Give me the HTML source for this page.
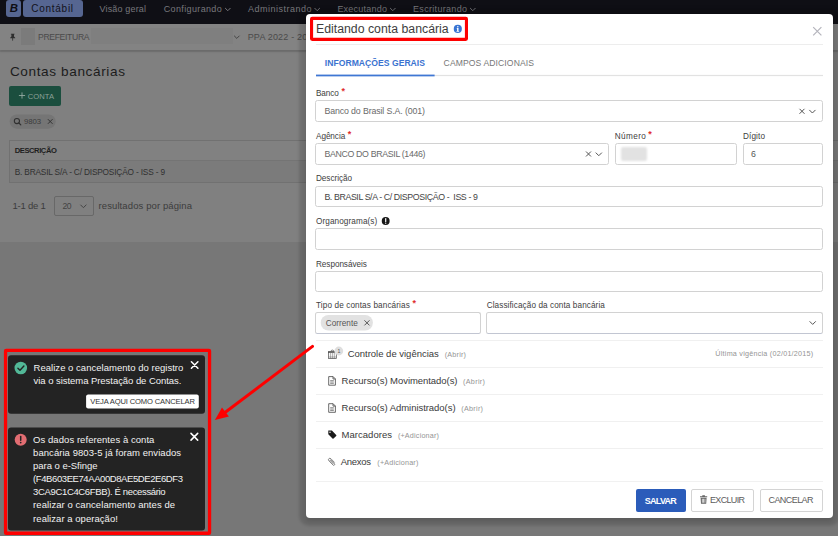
<!DOCTYPE html>
<html lang="pt-BR"><head><meta charset="utf-8"><title>Editando conta bancária</title>
<style>
html,body{margin:0;padding:0}
body{width:838px;height:536px;position:relative;overflow:hidden;background:#777777;font-family:"Liberation Sans",sans-serif}
.a{position:absolute;box-sizing:border-box}
.t{position:absolute;white-space:nowrap;line-height:1}
svg.l{position:absolute;left:0;top:0;width:838px;height:536px;overflow:visible}
.inp{position:absolute;box-sizing:border-box;border:1px solid #d2d2d2;border-radius:2.5px;background:#fff}
.sep{position:absolute;left:316px;width:507px;height:1px;background:#f0f0f0}
</style></head><body>
<!-- page layer -->
<div class="a" style="left:0;top:52px;width:838px;height:189.6px;background:#808080"></div>
<div class="a" style="left:0;top:23px;width:838px;height:27.4px;background:#838383;box-shadow:0 1.5px 2px rgba(0,0,0,.1)"></div>
<div class="a" style="left:0;top:0;width:838px;height:23.7px;background:#0f0f15"></div>
<div class="a" style="left:5.9px;top:-0.3px;width:15.4px;height:16.9px;background:#566691;border-radius:3px"></div>
<div class="a" style="left:22.5px;top:-0.3px;width:60.3px;height:17.2px;background:#566691;border-radius:3px"></div>
<div class="a" style="left:21px;top:28px;width:13.5px;height:17px;background:#7b7b7b"></div>
<div class="a" style="left:91px;top:27.6px;width:142px;height:16.2px;background:#7f7f7f"></div>
<div class="a" style="left:9.2px;top:86px;width:51.8px;height:20.2px;background:#1b4e3e;border-radius:2px"></div>
<div class="a" style="left:9.2px;top:140.3px;width:840px;height:43px;border:1px solid #717171;background:#7b7b7b"></div>
<div class="a" style="left:10.2px;top:141.3px;width:840px;height:20px;background:#818181;border-bottom:1px solid #747474"></div>
<div class="a" style="left:53.5px;top:196px;width:40px;height:20px;border:1px solid #686868;border-radius:2px;background:#808080"></div>
<svg class="l" viewBox="0 0 838 536" fill="none">
 <g stroke="#77777c" stroke-width="1" stroke-linecap="round" stroke-linejoin="round">
  <path d="M225.4 8.3l2.4 2.4 2.4-2.4"/><path d="M314.8 8.3l2.4 2.4 2.4-2.4"/><path d="M390.4 8.3l2.4 2.4 2.4-2.4"/><path d="M470.4 8.3l2.4 2.4 2.4-2.4"/>
 </g>
 <path d="M234.4 36l2.4 2.4 2.4-2.4" stroke="#444" stroke-width="1" stroke-linecap="round" stroke-linejoin="round"/>
 <path d="M80.7 205l2.7 2.7 2.7-2.7" stroke="#444" stroke-width="1" stroke-linecap="round" stroke-linejoin="round"/>
 <rect x="9.6" y="114.5" width="46.1" height="14.2" rx="7.1" fill="#757575"/>
 <!-- pin -->
 <path d="M10.9 33.8h3.6v.7h-.5v1.9l1.2 1.3v.6h-2.1v2l-.4.6-.4-.6v-2h-2.1v-.6l1.2-1.3v-1.9h-.5z" fill="#2e2e2e"/>
 <!-- plus -->
 <path d="M22 92.4v6.2M18.9 95.5h6.2" stroke="#93a8a0" stroke-width="0.9"/>
 <!-- search -->
 <circle cx="16.9" cy="121" r="2.6" stroke="#303030" stroke-width="1.05"/><path d="M18.9 123l1.9 1.9" stroke="#303030" stroke-width="1.2" stroke-linecap="round"/>
 <path d="M47.9 119.2l4.6 4.6M52.5 119.2l-4.6 4.6" stroke="#333" stroke-width="1"/>
</svg>
<span class="t" style="left:9.80px;top:3px;font-size:11.4px;color:#0e0e14;font-weight:700;font-style:italic;">B</span>
<span class="t" style="left:31.30px;top:4px;font-size:10.0px;color:#12121a;letter-spacing:0.728px;">Contábil</span>
<span class="t" style="left:99.50px;top:5px;font-size:9.0px;color:#77777c;letter-spacing:0.163px;">Visão geral</span>
<span class="t" style="left:163.75px;top:5px;font-size:9.0px;color:#77777c;letter-spacing:0.359px;">Configurando</span>
<span class="t" style="left:248.00px;top:5px;font-size:9.0px;color:#77777c;letter-spacing:0.497px;">Administrando</span>
<span class="t" style="left:337.40px;top:5px;font-size:9.0px;color:#77777c;letter-spacing:0.228px;">Executando</span>
<span class="t" style="left:413.00px;top:5px;font-size:9.0px;color:#77777c;letter-spacing:0.315px;">Escriturando</span>
<span class="t" style="left:38.00px;top:33px;font-size:8.6px;color:#4a4a4a;letter-spacing:-0.326px;">PREFEITURA</span>
<span class="t" style="left:247.70px;top:33px;font-size:9.0px;color:#4a4a4a;letter-spacing:0.179px;">PPA 2022 - 2025</span>
<span class="t" style="left:9.90px;top:65px;font-size:13.6px;color:#1c1c1c;letter-spacing:0.620px;">Contas bancárias</span>
<span class="t" style="left:27.70px;top:93px;font-size:7.6px;color:#8ba198;letter-spacing:0.071px;">CONTA</span>
<span class="t" style="left:23.90px;top:118px;font-size:7.8px;color:#3c3c3c;letter-spacing:-0.086px;">9803</span>
<span class="t" style="left:14.70px;top:147px;font-size:7.6px;color:#1e1e1e;font-weight:700;letter-spacing:-0.422px;">DESCRIÇÃO</span>
<span class="t" style="left:14.70px;top:168px;font-size:8.3px;color:#303030;letter-spacing:-0.174px;">B. BRASIL S/A - C/ DISPOSIÇÃO - ISS - 9</span>
<span class="t" style="left:12.40px;top:201px;font-size:9.5px;color:#3c3c3c;letter-spacing:-0.211px;">1-1 de 1</span>
<span class="t" style="left:62.60px;top:202px;font-size:8.6px;color:#444;letter-spacing:-0.563px;">20</span>
<span class="t" style="left:98.50px;top:201px;font-size:9.5px;color:#3c3c3c;letter-spacing:0.106px;">resultados por página</span>

<!-- modal -->
<div class="a" style="left:306px;top:14px;width:527px;height:503.5px;background:#fff;border-radius:4px;box-shadow:0 1px 3px 6.5px rgba(0,0,0,.13),0 3px 4px rgba(0,0,0,.12)"></div>
<div class="sep" style="top:43.6px;background:#ededed"></div>
<div class="inp" style="left:315.3px;top:100px;width:507.3px;height:22.4px"></div>
<div class="inp" style="left:315.3px;top:143.4px;width:294px;height:21.2px"></div>
<div class="inp" style="left:614.8px;top:143.4px;width:122.5px;height:21.2px"></div>
<div class="a" style="left:620.5px;top:147px;width:26.2px;height:14px;background:#e2e2e2;border-radius:2px;filter:blur(.8px)"></div>
<div class="inp" style="left:743px;top:143.4px;width:79.6px;height:21.2px"></div>
<div class="inp" style="left:315.3px;top:185.6px;width:507.3px;height:21.6px"></div>
<div class="inp" style="left:315.3px;top:228.4px;width:507.3px;height:21.6px"></div>
<div class="inp" style="left:315.3px;top:271.1px;width:507.3px;height:20.6px"></div>
<div class="inp" style="left:315.3px;top:311.7px;width:165.5px;height:22px;border-bottom-color:#c2c6d2"></div>
<div class="inp" style="left:486.3px;top:311.6px;width:336.3px;height:22px;border-bottom-color:#c2c6d2"></div>
<div class="sep" style="top:340.3px"></div>
<div class="sep" style="top:367px"></div>
<div class="sep" style="top:394px"></div>
<div class="sep" style="top:421px"></div>
<div class="sep" style="top:448.2px"></div>
<div class="sep" style="top:481px;background:#f1f1f1"></div>
<div class="a" style="left:636.25px;top:488.75px;width:49.75px;height:22.8px;background:#2b5cba;border-radius:2px"></div>
<div class="a" style="left:691.25px;top:488.75px;width:62.25px;height:22.8px;border:1px solid #d4d4d4;border-radius:2px;background:#fff"></div>
<div class="a" style="left:760px;top:488.75px;width:62.5px;height:22.8px;border:1px solid #d4d4d4;border-radius:2px;background:#fff"></div>

<!-- toasts -->

<svg class="l" viewBox="0 0 838 536" fill="none">
 <rect x="8" y="355.3" width="197" height="58.4" rx="3" fill="#232323"/>
 <rect x="8" y="427.4" width="197" height="103.2" rx="3" fill="#232323"/>
 <rect x="86.1" y="394.4" width="112.7" height="14.1" rx="2" fill="#fff"/>
 <rect x="5.55" y="350.45" width="204" height="182.8" rx=".6" stroke="#fe0000" stroke-width="3.3"/>
 <rect x="311.55" y="18.4" width="154.9" height="20.95" rx=".6" stroke="#fe0000" stroke-width="3.1"/>
 <rect x="316" y="74.9" width="507" height="1.2" fill="#e2e2e2"/><rect x="316" y="74.6" width="118.6" height="1.75" fill="#3f77d4"/>
 <rect x="320.7" y="315" width="52.2" height="15.4" rx="7.7" fill="#e2e2e2"/>
 <!-- info icon -->
 <circle cx="457.8" cy="28.9" r="4.05" fill="#3874d3"/><circle cx="457.8" cy="26.8" r=".75" fill="#fff"/><path d="M456.9 28.1h1.6v2.9h.6v.7h-2.6v-.7h.6v-2.2h-.5z" fill="#fff"/>
 <!-- close -->
 <path d="M813.2 27.1l8.2 8.2M821.4 27.1l-8.2 8.2" stroke="#b4b4bc" stroke-width="1.2"/>
 <!-- select icons -->
 <g stroke="#555" stroke-width="1" stroke-linecap="round" stroke-linejoin="round">
  <path d="M799.8 109.1l4.4 4.4M804.2 109.1l-4.4 4.4"/><path d="M809.6 110.2l2.8 2.8 2.8-2.8"/>
  <path d="M586.3 151.8l4.4 4.4M590.7 151.8l-4.4 4.4"/><path d="M596 152.9l2.8 2.8 2.8-2.8"/>
  <path d="M809.9 321.6l2.8 2.8 2.8-2.8"/>
  <path d="M364.7 320.6l4.5 4.5M369.2 320.6l-4.5 4.5"/>
 </g>
 <!-- asterisks -->
 <g fill="#e02d2d" font-family="Liberation Sans, sans-serif" font-size="9" font-weight="700">
  <text x="341.6" y="94.3">*</text><text x="347.7" y="137.1">*</text><text x="648.2" y="137.1">*</text><text x="412.6" y="306.4">*</text>
 </g>
 <!-- organograma ! -->
 <circle cx="385.7" cy="221" r="3.95" fill="#181818"/><path d="M385.7 218.5v3" stroke="#fff" stroke-width="1.2" stroke-linecap="round"/><circle cx="385.7" cy="223.2" r=".65" fill="#fff"/>
 <!-- calendar -->
 <g stroke="#4a4a4a" fill="none"><rect x="328.4" y="351.8" width="7.9" height="6.8" stroke-width=".7"/><path d="M328 352.1h8.7" stroke-width="1.3"/><path d="M331 351.4a1.4 1.3 0 012.8 0" stroke-width=".7"/><path d="M330.4 353v5.4M332.35 353v5.4M334.3 353v5.4" stroke-width=".45"/><path d="M328.6 357h7.5" stroke-width=".4"/></g>
 <circle cx="338.8" cy="351" r="4.4" fill="#dedede"/>
 <text x="337.5" y="352.7" font-family="Liberation Sans, sans-serif" font-size="5.2" fill="#555">1</text>
 <!-- docs -->
 <g stroke="#444" stroke-width=".8" stroke-linejoin="round"><path d="M328.7 376.6h4.4l2.3 2.3v6.3h-6.7z"/><path d="M333 376.7v2.3h2.3"/><path d="M330.2 380.6h3.6M330.2 382h3.6M330.2 383.4h3.6" stroke-width=".6"/>
  <path d="M328.7 403.7h4.4l2.3 2.3v6.3h-6.7z"/><path d="M333 403.8v2.3h2.3"/><path d="M330.2 407.7h3.6M330.2 409.1h3.6M330.2 410.5h3.6" stroke-width=".6"/></g>
 <!-- tag -->
 <path d="M328.3 430.6h3.6l4.3 4.3a.7.7 0 010 1l-2.7 2.7a.7.7 0 01-1 0l-4.2-4.3z" fill="#1a1a1a"/><circle cx="330" cy="432.3" r=".7" fill="#fff"/>
 <!-- paperclip -->
 <path d="M334.4 462.3l-3.5-3.6a1.45 1.45 0 00-2.05 2.05l4.2 4.3a.95.95 0 001.35-1.35l-3.6-3.7a.42.42 0 00-.6.6l2.9 3" stroke="#555" stroke-width=".7" stroke-linecap="round" stroke-linejoin="round"/>
 <!-- trash -->
 <g fill="#666"><path d="M700 496.3h7.2v1h-7.2zM702.3 495.3h2.6v1.1h-2.6z"/><path d="M700.6 497.8h6l-.4 6h-5.2zM701.9 498.8v4h.7v-4zM703.25 498.8v4h.7v-4zM704.6 498.8v4h.7v-4z" fill-rule="evenodd"/></g>
 <!-- toast icons -->
 <circle cx="20.8" cy="368" r="6.3" fill="#52b897"/><path d="M17.9 368.2l2.1 2.1 3.9-4.2" stroke="#232323" stroke-width="1.4" stroke-linecap="round" stroke-linejoin="round"/>
 <circle cx="20.7" cy="439.8" r="6" fill="#e26d72"/><path d="M20.7 436.6v3.6" stroke="#232323" stroke-width="1.5" stroke-linecap="round"/><circle cx="20.7" cy="442.6" r=".85" fill="#232323"/>
 <g stroke="#fff" stroke-width="1.55" stroke-linecap="round"><path d="M191.4 361.8l6.5 6.5M197.9 361.8l-6.5 6.5"/><path d="M191 433.4l6.7 6.7M197.7 433.4l-6.7 6.7"/></g>
 <!-- arrow -->
 <path d="M312.5 346.4L222 414.7" stroke="#fe0000" stroke-width="3" stroke-linecap="round"/>
 <path d="M214.9 420.1L222 407.4L228.9 416.4z" fill="#fe0000"/>
</svg>
<span class="t" style="left:316.00px;top:23px;font-size:12.3px;color:#3e3e3e;">Editando conta bancária</span>
<span class="t" style="left:324.80px;top:59px;font-size:8.6px;color:#3b73d0;font-weight:700;letter-spacing:0.024px;">INFORMAÇÕES GERAIS</span>
<span class="t" style="left:443.60px;top:59px;font-size:8.6px;color:#777;letter-spacing:0.098px;">CAMPOS ADICIONAIS</span>
<span class="t" style="left:316.00px;top:90px;font-size:8.2px;color:#404040;letter-spacing:-0.105px;">Banco</span>
<span class="t" style="left:324.40px;top:107px;font-size:8.8px;color:#6a6a6a;letter-spacing:-0.123px;">Banco do Brasil S.A. (001)</span>
<span class="t" style="left:316.00px;top:133px;font-size:8.2px;color:#404040;letter-spacing:-0.066px;">Agência</span>
<span class="t" style="left:324.40px;top:150px;font-size:8.8px;color:#6a6a6a;letter-spacing:-0.339px;">BANCO DO BRASIL (1446)</span>
<span class="t" style="left:614.80px;top:133px;font-size:8.2px;color:#404040;letter-spacing:0.375px;">Número</span>
<span class="t" style="left:743.00px;top:133px;font-size:8.2px;color:#404040;letter-spacing:0.122px;">Dígito</span>
<span class="t" style="left:751.00px;top:150px;font-size:8.8px;color:#555;">6</span>
<span class="t" style="left:316.00px;top:175px;font-size:8.2px;color:#404040;letter-spacing:-0.051px;">Descrição</span>
<span class="t" style="left:324.40px;top:193px;font-size:8.8px;color:#444;letter-spacing:-0.393px;white-space:pre;">B. BRASIL S/A - C/ DISPOSIÇÃO -  ISS - 9</span>
<span class="t" style="left:316.00px;top:218px;font-size:8.2px;color:#404040;letter-spacing:0.094px;">Organograma(s)</span>
<span class="t" style="left:316.00px;top:261px;font-size:8.2px;color:#404040;letter-spacing:-0.058px;">Responsáveis</span>
<span class="t" style="left:316.00px;top:302px;font-size:8.2px;color:#404040;letter-spacing:0.114px;">Tipo de contas bancárias</span>
<span class="t" style="left:486.70px;top:302px;font-size:8.2px;color:#404040;letter-spacing:0.086px;">Classificação da conta bancária</span>
<span class="t" style="left:325.80px;top:320px;font-size:8.2px;color:#555;letter-spacing:0.020px;">Corrente</span>
<span class="t" style="left:347.70px;top:349px;font-size:9.5px;color:#3a3a3a;letter-spacing:-0.013px;">Controle de vigências</span>
<span class="t" style="left:444.70px;top:351px;font-size:7.2px;color:#949494;letter-spacing:0.222px;">(Abrir)</span>
<span class="t" style="left:715.30px;top:350px;font-size:7.2px;color:#949494;letter-spacing:0.237px;">Última vigência (02/01/2015)</span>
<span class="t" style="left:341.60px;top:376px;font-size:9.5px;color:#3a3a3a;letter-spacing:-0.054px;">Recurso(s) Movimentado(s)</span>
<span class="t" style="left:463.00px;top:378px;font-size:7.2px;color:#949494;letter-spacing:0.339px;">(Abrir)</span>
<span class="t" style="left:341.60px;top:403px;font-size:9.5px;color:#3a3a3a;letter-spacing:-0.044px;">Recurso(s) Administrado(s)</span>
<span class="t" style="left:461.30px;top:405px;font-size:7.2px;color:#949494;letter-spacing:0.289px;">(Abrir)</span>
<span class="t" style="left:341.60px;top:430px;font-size:9.5px;color:#3a3a3a;letter-spacing:0.025px;">Marcadores</span>
<span class="t" style="left:397.90px;top:432px;font-size:7.2px;color:#949494;letter-spacing:0.195px;">(+Adicionar)</span>
<span class="t" style="left:340.70px;top:457px;font-size:9.5px;color:#3a3a3a;letter-spacing:-0.277px;">Anexos</span>
<span class="t" style="left:377.30px;top:459px;font-size:7.2px;color:#949494;letter-spacing:0.186px;">(+Adicionar)</span>
<span class="t" style="left:644.75px;top:497px;font-size:9.0px;color:#fff;font-weight:700;letter-spacing:-0.734px;">SALVAR</span>
<span class="t" style="left:710.00px;top:496px;font-size:9.0px;color:#5c5c5c;letter-spacing:-0.669px;">EXCLUIR</span>
<span class="t" style="left:768.50px;top:496px;font-size:9.0px;color:#5c5c5c;letter-spacing:-0.574px;">CANCELAR</span>
<span class="t" style="left:33.60px;top:363px;font-size:9.5px;color:#f2f2f2;letter-spacing:0.024px;">Realize o cancelamento do registro</span>
<span class="t" style="left:33.60px;top:376px;font-size:9.5px;color:#f2f2f2;letter-spacing:-0.050px;">via o sistema Prestação de Contas.</span>
<span class="t" style="left:90.30px;top:398px;font-size:7.6px;color:#333;letter-spacing:-0.151px;">VEJA AQUI COMO CANCELAR</span>
<span class="t" style="left:33.10px;top:435px;font-size:9.5px;color:#f2f2f2;letter-spacing:0.054px;">Os dados referentes à conta</span>
<span class="t" style="left:33.10px;top:448px;font-size:9.5px;color:#f2f2f2;letter-spacing:0.053px;">bancária 9803-5 já foram enviados</span>
<span class="t" style="left:33.10px;top:461px;font-size:9.5px;color:#f2f2f2;letter-spacing:-0.033px;">para o e-Sfinge</span>
<span class="t" style="left:33.10px;top:474px;font-size:9.5px;color:#f2f2f2;letter-spacing:-0.414px;">(F4B603EE74AA00D8AE5DE2E6DF3</span>
<span class="t" style="left:33.10px;top:487px;font-size:9.5px;color:#f2f2f2;letter-spacing:-0.354px;">3CA9C1C4C6FBB). É necessário</span>
<span class="t" style="left:33.10px;top:500px;font-size:9.5px;color:#f2f2f2;letter-spacing:0.066px;">realizar o cancelamento antes de</span>
<span class="t" style="left:33.10px;top:514px;font-size:9.5px;color:#f2f2f2;letter-spacing:0.044px;">realizar a operação!</span>
</body></html>
